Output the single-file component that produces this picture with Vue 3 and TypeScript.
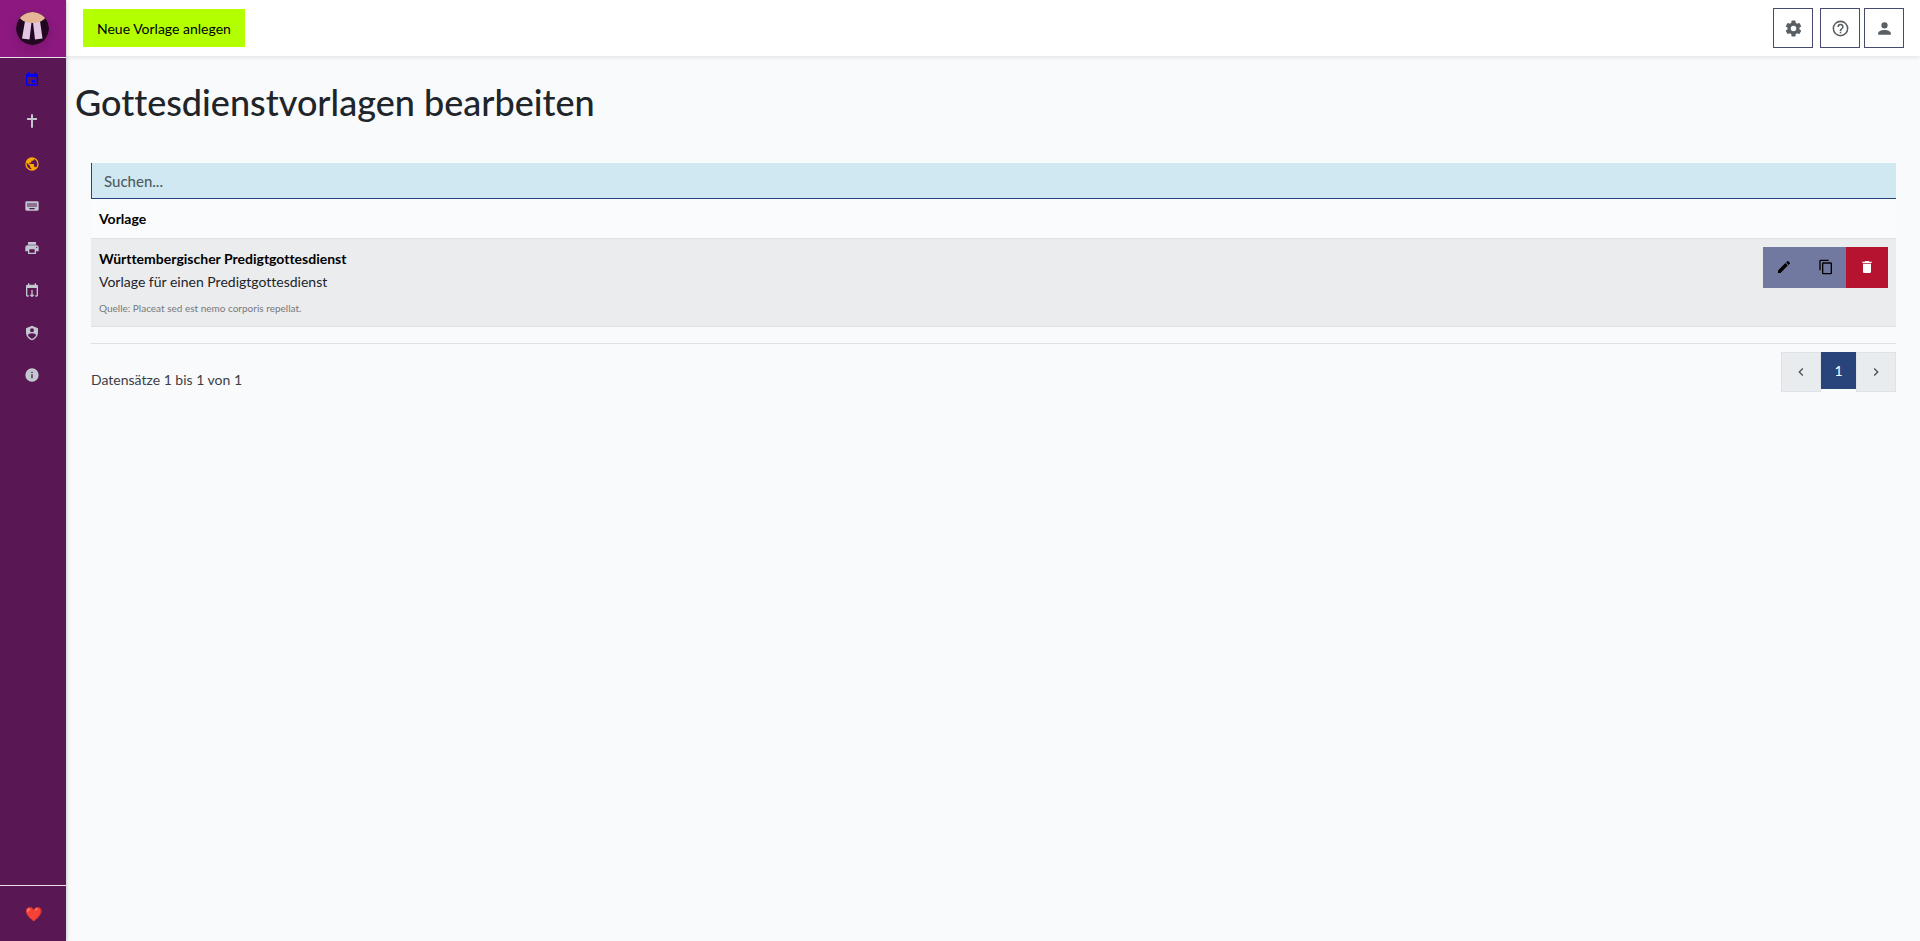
<script setup lang="ts">
import { ref, computed } from 'vue'

interface NavItem { label: string; tone: string; path: string }
interface Template { title: string; description: string; source: string }

const nav: NavItem[] = [
  { label: 'Kalender', tone: 'blue', path: 'M19 4h-1V2h-2v2H8V2H6v2H5a2 2 0 0 0-2 2v14a2 2 0 0 0 2 2h14a2 2 0 0 0 2-2V6a2 2 0 0 0-2-2zm0 16H5V9h14v11zm-7-7h5v5h-5z' },
  { label: 'Gottesdienste', tone: 'grey', path: 'M10.500 2h3v5.500H19.500v3h-6V22h-3V10.500h-6v-3h6z' },
  { label: 'Website', tone: 'orange', path: 'M17.900 17.390c-.26-.8-1.010-1.390-1.900-1.390h-1v-3a1 1 0 0 0-1-1H8v-2h2a1 1 0 0 0 1-1V7h2a2 2 0 0 0 2-2v-.41c2.930 1.180 5 4.050 5 7.410 0 2.080-.8 3.970-2.100 5.390M11 19.930C7.050 19.440 4 16.080 4 12c0-.62.080-1.220.210-1.790L9 15v1a2 2 0 0 0 2 2m1-16A10 10 0 0 0 2 12a10 10 0 0 0 10 10 10 10 0 0 0 10-10A10 10 0 0 0 12 2z' },
  { label: 'Eingabe', tone: 'grey', path: 'M19 10h-2V8h2m0 5h-2v-2h2m-3-1h-2V8h2m0 5h-2v-2h2m0 6H8v-2h8m-9-5H5V8h2m0 5H5v-2h2m1 0h2v2H8m0-5h2v2H8m3 1h2v2h-2m0-5h2v2h-2m9-5H4a2 2 0 0 0-2 2v10a2 2 0 0 0 2 2h16a2 2 0 0 0 2-2V7a2 2 0 0 0-2-2z' },
  { label: 'Ausgabe', tone: 'grey', path: 'M18 3H6v4h12m1 5a1 1 0 1 1 0-2 1 1 0 0 1 0 2m-3 7H8v-5h8m3-6H5a3 3 0 0 0-3 3v6h4v4h12v-4h4v-6a3 3 0 0 0-3-3z' },
  { label: 'Kalender exportieren', tone: 'grey', path: 'M19 4h-1V2h-2v2H8V2H6v2H5a2 2 0 0 0-2 2v14a2 2 0 0 0 2 2h2v-2H5V9h14v11h-2v2h2a2 2 0 0 0 2-2V6a2 2 0 0 0-2-2zM11 12h2v7h3l-4 4-4-4h3z' },
  { label: 'Administration', tone: 'grey', path: 'M12 1 3 5v6c0 5.550 3.840 10.740 9 12 5.160-1.260 9-6.450 9-12V5l-9-4m0 4a3 3 0 1 1 0 6 3 3 0 0 1 0-6m5.130 12A9.700 9.700 0 0 1 12 20.920 9.700 9.700 0 0 1 6.870 17a9 9 0 0 1-.87-1.500C6 13.850 8.710 12.500 12 12.500s6 1.320 6 3a9 9 0 0 1-.87 1.500z' },
  { label: 'Über', tone: 'grey', path: 'M13 9h-2V7h2m0 10h-2v-6h2m-1-9A10 10 0 0 0 2 12a10 10 0 0 0 10 10 10 10 0 0 0 10-10A10 10 0 0 0 12 2z' },
]

const tools = [
  { label: 'Einstellungen', path: 'M12 15.500A3.500 3.500 0 0 1 8.500 12 3.500 3.500 0 0 1 12 8.500a3.500 3.500 0 0 1 3.500 3.500 3.500 3.500 0 0 1-3.500 3.500m7.430-2.530c.04-.32.07-.64.07-.97s-.03-.66-.07-1l2.110-1.630c.19-.15.24-.42.12-.64l-2-3.460c-.12-.22-.39-.31-.61-.22l-2.490 1c-.52-.39-1.060-.73-1.690-.98l-.37-2.650A.5.5 0 0 0 14 2h-4a.5.5 0 0 0-.5.42l-.37 2.650c-.63.25-1.170.59-1.690.98l-2.490-1c-.22-.09-.49 0-.61.22l-2 3.460c-.13.22-.07.49.12.64L4.570 11c-.04.34-.07.67-.07 1s.03.65.07.97l-2.110 1.660c-.19.15-.25.42-.12.64l2 3.460c.12.22.39.3.61.22l2.490-1.010c.52.4 1.060.74 1.690.99l.37 2.650c.04.24.25.42.5.42h4c.25 0 .46-.18.5-.42l.37-2.650c.63-.26 1.170-.59 1.690-.99l2.490 1.010c.22.08.49 0 .61-.22l2-3.460c.12-.22.07-.49-.12-.64z' },
  { label: 'Hilfe', path: 'M11 18h2v-2h-2v2m1-16A10 10 0 0 0 2 12a10 10 0 0 0 10 10 10 10 0 0 0 10-10A10 10 0 0 0 12 2m0 18c-4.410 0-8-3.590-8-8s3.590-8 8-8 8 3.590 8 8-3.590 8-8 8m0-14a4 4 0 0 0-4 4h2a2 2 0 0 1 2-2 2 2 0 0 1 2 2c0 2-3 1.750-3 5h2c0-2.250 3-2.500 3-5a4 4 0 0 0-4-4z' },
  { label: 'Profil', path: 'M12 4a4 4 0 1 1 0 8 4 4 0 0 1 0-8m0 10c4.420 0 8 1.790 8 4v2H4v-2c0-2.210 3.580-4 8-4z' },
]

const templates: Template[] = [
  {
    title: 'Württembergischer Predigtgottesdienst',
    description: 'Vorlage für einen Predigtgottesdienst',
    source: 'Placeat sed est nemo corporis repellat.',
  },
]

const query = ref('')
const visible = computed(() =>
  templates.filter(t => (t.title + t.description).toLowerCase().includes(query.value.toLowerCase())),
)
</script>

<template>
  <div class="layout">
    <aside class="sidebar">
      <a class="brand" href="#" aria-label="Startseite">
        <svg class="logo" viewBox="0 0 33 33" aria-hidden="true">
          <defs><clipPath id="disc"><circle cx="16.500" cy="16.500" r="16.500" /></clipPath></defs>
          <g clip-path="url(#disc)">
            <rect width="33" height="33" fill="#23061f" />
            <path d="M9 9 15.500 10.500 13.500 27.500 6 26.500z" fill="#e2c6e2" />
            <path d="M17 10.500 24 9 26.500 26.500 19 27.500z" fill="#e2c6e2" />
            <ellipse cx="16.500" cy="4" rx="13" ry="7" fill="#e5b797" />
          </g>
        </svg>
      </a>
      <nav class="nav">
        <a v-for="item in nav" :key="item.label" href="#" class="nav-link" :class="item.tone" :aria-label="item.label">
          <svg viewBox="0 0 24 24" aria-hidden="true"><path fill-rule="evenodd" :d="item.path" /></svg>
        </a>
      </nav>
      <a class="heart" href="#" aria-label="Danke">❤️</a>
    </aside>

    <div class="page">
      <header class="topbar">
        <button class="create" type="button">Neue Vorlage anlegen</button>
        <div class="tools">
          <button v-for="tool in tools" :key="tool.label" type="button" class="tool" :aria-label="tool.label">
            <svg viewBox="0 0 24 24" aria-hidden="true"><path :d="tool.path" /></svg>
          </button>
        </div>
      </header>

      <main>
        <h1>Gottesdienstvorlagen bearbeiten</h1>
        <section class="content">
          <input v-model="query" class="search" type="text" placeholder="Suchen..." aria-label="Suchen">
          <table>
            <thead>
              <tr><th scope="col">Vorlage</th><th scope="col" aria-label="Aktionen"></th></tr>
            </thead>
            <tbody>
              <tr v-for="t in visible" :key="t.title">
                <td>
                  <div class="title">{{ t.title }}</div>
                  <div>{{ t.description }}</div>
                  <div class="source">Quelle: {{ t.source }}</div>
                </td>
                <td class="actions-cell">
                  <div class="actions">
                    <button type="button" aria-label="Bearbeiten">
                      <svg viewBox="0 0 24 24" aria-hidden="true"><path d="M20.710 7.040c.39-.39.39-1.040 0-1.410l-2.340-2.340c-.37-.39-1.020-.39-1.410 0l-1.840 1.830 3.750 3.750M3 17.250V21h3.750L17.810 9.930l-3.750-3.750z" /></svg>
                    </button>
                    <button type="button" aria-label="Kopieren">
                      <svg viewBox="0 0 24 24" aria-hidden="true"><path d="M19 21H8V7h11m0-2H8a2 2 0 0 0-2 2v14a2 2 0 0 0 2 2h11a2 2 0 0 0 2-2V7a2 2 0 0 0-2-2m-3-4H4a2 2 0 0 0-2 2v14h2V3h12z" /></svg>
                    </button>
                    <button type="button" class="danger" aria-label="Löschen">
                      <svg viewBox="0 0 24 24" aria-hidden="true"><path d="M19 4h-3.500l-1-1h-5l-1 1H5v2h14M6 19a2 2 0 0 0 2 2h8a2 2 0 0 0 2-2V7H6z" /></svg>
                    </button>
                  </div>
                </td>
              </tr>
            </tbody>
          </table>
          <footer class="table-footer">
            <span class="summary">Datensätze 1 bis 1 von 1</span>
            <nav class="pagination" aria-label="Seiten">
              <button type="button" class="step" aria-label="Zurück">
                <svg viewBox="0 0 24 24" aria-hidden="true"><path d="M15.410 16.580 10.830 12l4.580-4.590L14 6l-6 6 6 6z" /></svg>
              </button>
              <button type="button" class="current" aria-current="page">1</button>
              <button type="button" class="step" aria-label="Weiter">
                <svg viewBox="0 0 24 24" aria-hidden="true"><path d="M8.590 16.580 13.170 12 8.590 7.410 10 6l6 6-6 6z" /></svg>
              </button>
            </nav>
          </footer>
        </section>
      </main>
    </div>
  </div>
</template>

<style>
body { margin: 0; background: #f8fafc; }
</style>

<style scoped>
* { box-sizing: border-box; }
.layout {
  display: flex;
  min-height: 100vh;
  font: 14px/23px Lato, "Noto Sans", sans-serif;
  font-variant-ligatures: none;
  color: #212529;
}
svg { display: block; width: 16px; height: 16px; fill: currentColor; }
button { font: inherit; font-variant-ligatures: none; border: 0; border-radius: 0; padding: 0; cursor: pointer; }
a { text-decoration: none; }

.sidebar {
  display: flex;
  flex-direction: column;
  flex: none;
  width: 66px;
  background: #591854;
  box-shadow: 0 0 4px rgba(0, 0, 0, 0.3);
  z-index: 2;
}
.brand {
  display: flex;
  align-items: center;
  justify-content: center;
  height: 58px;
  padding-right: 1px;
  background: #8d197f;
  border-bottom: 1px solid #eadfea;
}
.logo { width: 33px; height: 33px; border-radius: 50%; box-shadow: 0 4px 12px rgba(50, 0, 50, 0.2); }
.nav { display: flex; flex-direction: column; height: 338px; }
.nav-link {
  display: flex;
  flex: 1;
  align-items: center;
  justify-content: center;
  padding-right: 2px;
}
.grey { color: #c2c7d0; }
.blue { color: #0000ff; }
.orange { color: #ffa500; }
.heart {
  display: flex;
  align-items: center;
  justify-content: center;
  height: 56px;
  margin-top: auto;
  border-top: 1px solid #eadfea;
  font-size: 14px;
}

.page { flex: 1; min-width: 0; }
.topbar {
  display: flex;
  align-items: center;
  justify-content: space-between;
  height: 56px;
  padding: 0 16px 0 17px;
  background: #ffffff;
  box-shadow: 0 2px 4px rgba(0, 0, 0, 0.08);
}
.create { height: 38px; padding: 0 14px; background: #b3ff00; color: #000000; }
.tools { display: flex; }
.tool {
  display: flex;
  align-items: center;
  justify-content: center;
  width: 40px;
  height: 40px;
  margin-left: 4px;
  border: 1px solid #464b6b;
  background: #ffffff;
  color: #5a5f63;
}
.tool:nth-child(2) { margin-left: 7px; }
.tool svg { width: 19px; height: 19px; }

h1 { margin: 0; padding: 23px 9px 0; font-size: 36px; line-height: 46px; font-weight: 500; }
.content { padding: 38px 24px 0 25px; }
.search {
  display: block;
  width: 100%;
  height: 36px;
  padding: 0 12px;
  border: solid #28447a;
  border-width: 0 0 1px 1px;
  border-radius: 0;
  outline: 0;
  background: #d0e8f1;
  font: inherit;
  font-size: 15px;
  font-weight: 500;
}
.search::placeholder { color: #515c63; opacity: 1; }
table { width: 100%; border-collapse: collapse; }
th { height: 39px; padding: 0 8px; background: #fafbfd; text-align: left; color: #000000; }
th, td { border-bottom: 1px solid #dee2e6; }
td { padding: 8px; background: #ebecee; vertical-align: top; }
.title { font-weight: 700; color: #000000; }
.source { margin-top: 6px; font-size: 10px; line-height: 19px; color: #77797c; }
.actions-cell { width: 141px; }
.actions { display: flex; }
.actions button {
  display: flex;
  flex: 1;
  align-items: center;
  justify-content: center;
  height: 41px;
  background: #7179a0;
  color: #000000;
}
.actions .danger { background: #b61330; color: #ffffff; }
.table-footer {
  display: flex;
  justify-content: space-between;
  margin-top: 16px;
  padding-top: 8px;
  border-top: 1px solid #dee2e6;
}
.summary { padding-top: 16px; color: #3c4045; }
.pagination { display: flex; align-items: flex-start; }
.step {
  display: flex;
  align-items: center;
  justify-content: center;
  width: 40px;
  height: 40px;
  border: 1px solid #dee2e6;
  background: #e9ecef;
  color: #495057;
}
.current { width: 35px; height: 37px; background: #28447a; color: #ffffff; }
</style>
